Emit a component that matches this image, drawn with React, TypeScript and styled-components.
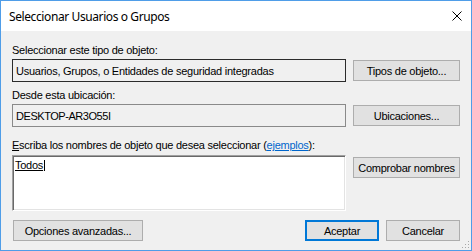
import React from "react";
import styled, { createGlobalStyle } from "styled-components";

const GlobalStyle = createGlobalStyle`
  html, body {
    margin: 0;
    padding: 0;
    background: #ffffff;
  }
  * {
    box-sizing: border-box;
  }
`;

const Window = styled.div`
  position: relative;
  width: 472px;
  height: 251px;
  border: 1px solid #4f9de8;
  background: #f0f0f0;
  display: flex;
  flex-direction: column;
  font-family: "Liberation Sans", Arial, sans-serif;
  font-size: 11px;
  letter-spacing: -0.25px;
  color: #000;
`;

const TitleBar = styled.div`
  height: 30px;
  background: #ffffff;
  display: flex;
  align-items: center;
  justify-content: space-between;
  padding: 0 9px 0 8px;
`;

const Title = styled.span`
  font-family: "Segoe UI", "Noto Sans", sans-serif;
  font-size: 12px;
  letter-spacing: -0.4px;
  color: #000;
  margin-top: 1px;
`;

const CloseButton = styled.svg`
  width: 10px;
  height: 10px;
`;

const Body = styled.div`
  flex: 1;
  display: flex;
  flex-direction: column;
  padding: 13px 11px 9px 11px;
`;

const Label = styled.div<{ $top?: number; $gap?: number }>`
  line-height: 13px;
  height: 13px;
  white-space: nowrap;
  margin-top: ${(p) => p.$top ?? 0}px;
  margin-bottom: ${(p) => p.$gap ?? 2}px;
`;

const Link = styled.span`
  color: #0066cc;
  text-decoration: underline;
`;

const AccessKey = styled.span`
  text-decoration: underline;
`;

const Row = styled.div`
  display: grid;
  grid-template-columns: 334px 107px;
  column-gap: 7px;
  align-items: start;
`;

const ReadOnlyBox = styled.div<{ $dark?: boolean }>`
  height: 23px;
  border: 1px solid ${(p) => (p.$dark ? "#2b2b2b" : "#8a8a8a")};
  background: #f0f0f0;
  display: flex;
  align-items: center;
  padding: 0 3px;
  white-space: nowrap;
  overflow: hidden;
`;

const Machine = styled.span`
  letter-spacing: -0.45px;
`;

const NamesBox = styled.div`
  height: 56px;
  background: #ffffff;
  border-top: 1px solid #a0a0a0;
  border-left: 1px solid #a0a0a0;
  border-right: 1px solid #ffffff;
  border-bottom: 1px solid #ffffff;
  box-shadow: inset 1px 1px 0 #696969, inset -1px -1px 0 #e3e3e3;
  padding: 3px 2px;
  line-height: 13px;
`;

const Resolved = styled.span`
  text-decoration: underline;
`;

const Caret = styled.span`
  display: inline-block;
  width: 1px;
  height: 11px;
  background: #000;
  vertical-align: -2px;
  margin-left: 1px;
`;

const Button = styled.div<{ $width?: number; $top?: number; $default?: boolean }>`
  height: 21px;
  width: ${(p) => (p.$width ? `${p.$width}px` : "auto")};
  margin-top: ${(p) => p.$top ?? 0}px;
  background: #e1e1e1;
  border: ${(p) => (p.$default ? "2px solid #0078d7" : "1px solid #adadad")};
  display: flex;
  align-items: center;
  justify-content: center;
  white-space: nowrap;
  color: #000;
`;

const Footer = styled.div`
  margin-top: 9px;
  display: flex;
  align-items: center;
  gap: 7px;
`;

const Spacer = styled.div`
  flex: 1;
`;

const AdvancedButton = styled(Button)`
  margin-left: 1px;
`;

const Grip = styled.svg`
  position: absolute;
  right: 1px;
  bottom: 1px;
  width: 10px;
  height: 10px;
`;

export default function App() {
  return (
    <>
      <GlobalStyle />
      <Window>
        <TitleBar>
          <Title>Seleccionar Usuarios o Grupos</Title>
          <CloseButton viewBox="0 0 10 10">
            <path d="M0.5 0.5 L9.5 9.5 M9.5 0.5 L0.5 9.5" stroke="#000" strokeWidth="1" />
          </CloseButton>
        </TitleBar>
        <Body>
          <Label>Seleccionar este tipo de objeto:</Label>
          <Row>
            <ReadOnlyBox $dark>Usuarios, Grupos, o Entidades de seguridad integradas</ReadOnlyBox>
            <Button $top={1}>Tipos de objeto...</Button>
          </Row>

          <Label $top={7}>Desde esta ubicación:</Label>
          <Row>
            <ReadOnlyBox>
              <Machine>DESKTOP-AR3O55I</Machine>
            </ReadOnlyBox>
            <Button $top={1}>Ubicaciones...</Button>
          </Row>

          <Label $top={12} $gap={3}>
            <AccessKey>E</AccessKey>scriba los nombres de objeto que desea seleccionar (
            <Link>ejemplos</Link>):
          </Label>
          <Row>
            <NamesBox>
              <Resolved>Todos</Resolved>
              <Caret />
            </NamesBox>
            <Button $top={2}>Comprobar nombres</Button>
          </Row>

          <Footer>
            <AdvancedButton $width={130}>Opciones avanzadas...</AdvancedButton>
            <Spacer />
            <Button $width={74} $default>
              Aceptar
            </Button>
            <Button $width={74}>Cancelar</Button>
          </Footer>
        </Body>
        <Grip viewBox="0 0 10 10">
          <rect x="8" y="2" width="1" height="1" fill="#a8a8a8" />
          <rect x="5" y="5" width="1" height="1" fill="#a8a8a8" />
          <rect x="8" y="5" width="1" height="1" fill="#a8a8a8" />
          <rect x="2" y="8" width="1" height="1" fill="#a8a8a8" />
          <rect x="5" y="8" width="1" height="1" fill="#a8a8a8" />
          <rect x="8" y="8" width="1" height="1" fill="#a8a8a8" />
        </Grip>
      </Window>
    </>
  );
}
